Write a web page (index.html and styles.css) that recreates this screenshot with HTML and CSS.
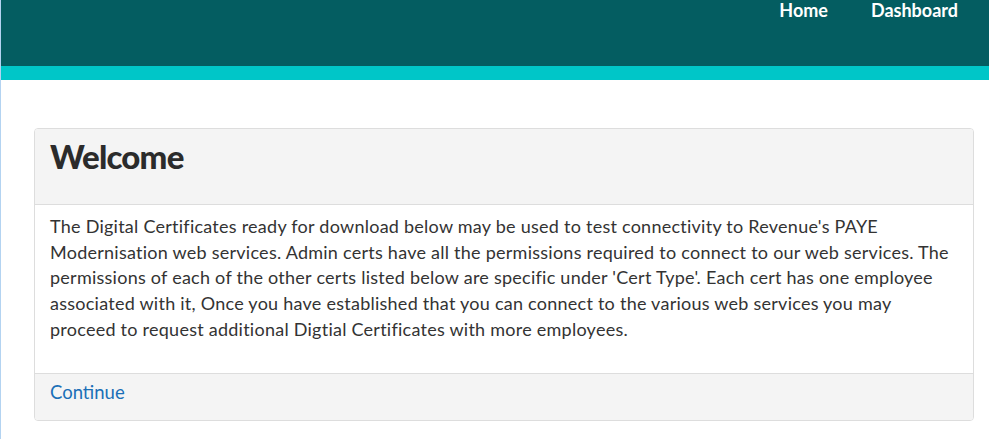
FILE: index.html
```html
<!DOCTYPE html>
<html lang="en">
<head>
<meta charset="utf-8">
<title>Welcome</title>
<link rel="stylesheet" href="styles.css">
</head>
<body>
<div class="page">
  <header class="masthead">
    <nav class="nav">
      <a class="nav-link" href="#">Home</a>
      <a class="nav-link" href="#">Dashboard</a>
    </nav>
  </header>
  <div class="stripe"></div>
  <main class="content">
    <section class="card">
      <div class="card-head">
        <h1 class="card-title">Welcome</h1>
      </div>
      <div class="card-body">
        <p class="card-text">The Digital Certificates ready for download below may be used to test connectivity to Revenue's PAYE Modernisation web services. Admin certs have all the permissions required to connect to our web services. The permissions of each of the other certs listed below are specific under 'Cert Type'. Each cert has one employee associated with it, Once you have established that you can connect to the various web services you may proceed to request additional Digtial Certificates with more employees.</p>
      </div>
      <div class="card-foot">
        <a class="card-link" href="#">Continue</a>
      </div>
    </section>
  </main>
</div>
</body>
</html>
```

FILE: styles.css
```css
html, body {
  margin: 0;
  padding: 0;
  background: #ffffff;
}

body {
  font-family: Lato, "Noto Sans", "Liberation Sans", sans-serif;
  color: #333333;
}

.page {
  border-left: 1px solid #b3d3f1;
  min-height: 439px;
  box-sizing: border-box;
}

.masthead {
  background: #045d61;
  height: 66px;
  display: flex;
  justify-content: flex-end;
  align-items: flex-start;
}

.nav {
  display: flex;
  gap: 43px;
  padding-right: 31px;
}

.nav-link {
  color: #ffffff;
  text-decoration: none;
  font-size: 18px;
  font-weight: 700;
  line-height: 21px;
}

.stripe {
  background: #00c6c8;
  height: 14px;
}

.content {
  padding: 48px 15px 0 33px;
}

.card {
  border: 1px solid #dddddd;
  border-radius: 4px;
  overflow: hidden;
}

.card-head {
  background: #f4f4f4;
  border-bottom: 1px solid #dddddd;
  height: 76px;
  padding: 7px 15px 0;
  box-sizing: border-box;
}

.card-title {
  margin: 0;
  font-size: 33px;
  line-height: 40px;
  font-weight: 900;
  letter-spacing: -0.8px;
  color: #2b2b2b;
}

.card-body {
  padding: 9px 15px 0;
  height: 168px;
  box-sizing: border-box;
}

.card-text {
  margin: 0;
  font-size: 18px;
  line-height: 25.714px;
  letter-spacing: 0.25px;
  color: #333333;
}

.card-foot {
  background: #f4f4f4;
  border-top: 1px solid #dddddd;
  height: 47px;
  padding: 6px 15px 0;
  box-sizing: border-box;
}

.card-link {
  color: #1a6fb7;
  text-decoration: none;
  font-size: 18.5px;
  line-height: 24px;
}
```
